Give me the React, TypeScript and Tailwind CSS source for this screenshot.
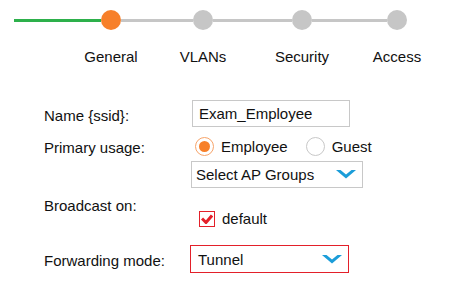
import React from 'react';

const Chevron = () => (
  <svg width="20" height="9" viewBox="0 0 20 9">
    <path d="M0 0 L4.5 0 L10 4.5 L15.5 0 L20 0 L10 8.5 Z" fill="#1b9dd9" />
  </svg>
);

export default function App() {
  const steps = [
    { name: 'General', ml: 'ml-[71px]' },
    { name: 'VLANs', ml: 'ml-[12px]' },
    { name: 'Security', ml: 'ml-[19px]' },
    { name: 'Access', ml: 'ml-[15px]' },
  ];

  return (
    <div className="w-[463px] h-[295px] bg-white font-['Liberation_Sans',Arial,sans-serif] text-[15px] leading-[17px] text-[#111]">
      {/* stepper */}
      <div className="flex items-center pt-[10px] pl-[14px]">
        <div className="w-[87px] h-[3px] bg-[#2db04b]" />
        <div className="w-5 h-5 rounded-full bg-[#f7802a]" />
        <div className="w-[72px] h-[3px] bg-[#c6c6c6]" />
        <div className="w-5 h-5 rounded-full bg-[#c6c6c6]" />
        <div className="w-[79px] h-[3px] bg-[#c6c6c6]" />
        <div className="w-5 h-5 rounded-full bg-[#c6c6c6]" />
        <div className="w-[75px] h-[3px] bg-[#c6c6c6]" />
        <div className="w-5 h-5 rounded-full bg-[#c6c6c6]" />
      </div>
      <div className="flex mt-[18px]">
        {steps.map((s) => (
          <span key={s.name} className={`w-20 text-center ${s.ml}`}>{s.name}</span>
        ))}
      </div>

      {/* form */}
      <div className="mt-[35px] pl-[44px] flex flex-col">
        <div className="flex items-start">
          <span className="w-[148px] mt-[7px]">Name {'{ssid}'}:</span>
          <div className="w-[158px] h-[27px] border border-[#c8c8c8] pl-[6px] flex items-center">Exam_Employee</div>
        </div>

        <div className="flex items-start mt-[9px]">
          <span className="w-[147px] mt-[3px]">Primary usage:</span>
          <div className="flex items-center ml-[4px] h-[20px]">
            <span className="w-[19px] h-[19px] rounded-full border border-[#f7a46a] flex items-center justify-center">
              <span className="w-[11px] h-[11px] rounded-full bg-[#f7802a]" />
            </span>
            <span className="ml-[7px]">Employee</span>
            <span className="ml-[18px] w-[19px] h-[19px] rounded-full border border-[#c8c8c8]" />
            <span className="ml-[7px]">Guest</span>
          </div>
        </div>

        <div className="flex mt-[5px] ml-[147px]">
          <div className="w-[172px] h-[27px] border border-[#c8c8c8] pl-[4px] pr-[6px] flex items-center justify-between">
            <span>Select AP Groups</span>
            <Chevron />
          </div>
        </div>

        <div className="flex items-start mt-[9px]">
          <span className="w-[147px]">Broadcast on:</span>
          <div className="flex items-center mt-[13px] ml-[8px]">
            <span className="w-4 h-4 border border-[#e3202a] flex items-center justify-center">
              <svg width="12" height="10" viewBox="0 0 12 10">
                <path d="M1 4.5 L5 8.5 L11 1.5" fill="none" stroke="#e3202a" strokeWidth="3" />
              </svg>
            </span>
            <span className="ml-[7px]">default</span>
          </div>
        </div>

        <div className="flex items-start mt-[18px]">
          <span className="w-[146px] mt-[7px]">Forwarding mode:</span>
          <div className="w-[159px] h-[28px] border border-[#e3202a] pl-[7px] pr-[6px] flex items-center justify-between">
            <span>Tunnel</span>
            <Chevron />
          </div>
        </div>
      </div>
    </div>
  );
}
